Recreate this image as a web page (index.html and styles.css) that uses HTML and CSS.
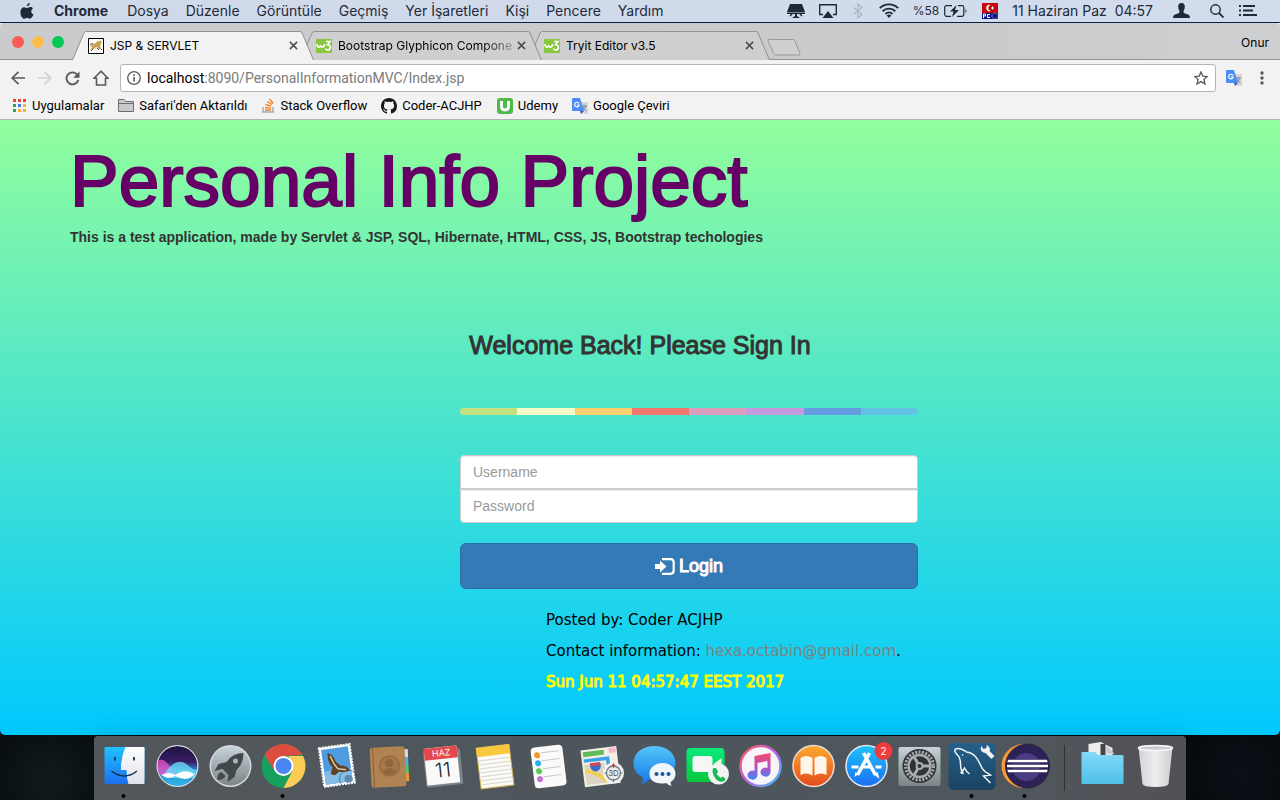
FILE: index.html
```html
<!DOCTYPE html>
<html lang="tr">
<head>
<meta charset="utf-8">
<meta name="viewport" content="width=device-width, initial-scale=1">
<title>JSP &amp; SERVLET</title>
<link rel="stylesheet" href="styles.css">
</head>
<body>
<svg class="defs" aria-hidden="true">
  <defs>
    <linearGradient id="g-blue" x1="0" y1="0" x2="0" y2="1"><stop offset="0" stop-color="#1ec3fb"/><stop offset="1" stop-color="#1d6ff0"/></linearGradient>
    <linearGradient id="g-sky" x1="0" y1="0" x2="0" y2="1"><stop offset="0" stop-color="#56c5fb"/><stop offset="1" stop-color="#1578e8"/></linearGradient>
    <linearGradient id="g-white" x1="0" y1="0" x2="0" y2="1"><stop offset="0" stop-color="#ffffff"/><stop offset="1" stop-color="#dfe2e8"/></linearGradient>
    <linearGradient id="g-metal" x1="0" y1="0" x2="0" y2="1"><stop offset="0" stop-color="#c5d3d8"/><stop offset="1" stop-color="#7b8486"/></linearGradient>
    <linearGradient id="g-siri" x1="0" y1="0" x2="0" y2="1"><stop offset="0" stop-color="#1c1440"/><stop offset=".4" stop-color="#3a1c66"/><stop offset=".6" stop-color="#2f8fd0"/><stop offset="1" stop-color="#2fb4e8"/></linearGradient>
    <linearGradient id="g-green" x1="0" y1="0" x2="0" y2="1"><stop offset="0" stop-color="#0bea7c"/><stop offset="1" stop-color="#06c83b"/></linearGradient>
    <linearGradient id="g-orange" x1="0" y1="0" x2="0" y2="1"><stop offset="0" stop-color="#fdab2e"/><stop offset="1" stop-color="#e5491c"/></linearGradient>
    <linearGradient id="g-note" x1="0" y1="0" x2="0" y2="1"><stop offset="0" stop-color="#fb4a66"/><stop offset=".55" stop-color="#b250c8"/><stop offset="1" stop-color="#3f8bf5"/></linearGradient>
    <linearGradient id="g-ring" x1="0" y1="0" x2="1" y2="1"><stop offset="0" stop-color="#fb5a50"/><stop offset=".5" stop-color="#c061e8"/><stop offset="1" stop-color="#35c2f7"/></linearGradient>
    <linearGradient id="g-sql" x1="0" y1="0" x2="0" y2="1"><stop offset="0" stop-color="#25608c"/><stop offset="1" stop-color="#1a4360"/></linearGradient>
    <linearGradient id="g-folder" x1="0" y1="0" x2="0" y2="1"><stop offset="0" stop-color="#83d9f7"/><stop offset="1" stop-color="#4fbfe8"/></linearGradient>
    <linearGradient id="g-trash" x1="0" y1="0" x2="1" y2="0"><stop offset="0" stop-color="#d2d3d6"/><stop offset=".5" stop-color="#eeeef0"/><stop offset="1" stop-color="#cfcfd3"/></linearGradient>
    <clipPath id="c-siri"><circle r="20"/></clipPath>
    <clipPath id="c-eclipse"><circle cx="2" r="20.500"/></clipPath>
    <symbol id="close" viewBox="0 0 10 10"><path d="M1 1l8 8M9 1l-8 8" stroke="#4d4d4d" stroke-width="1.700" fill="none"/></symbol>
    <symbol id="w3" viewBox="0 0 16 14"><rect width="16" height="14" rx="1" fill="#8ac53f"/><path d="M1 5c0 4 3.500 4 3.500 1 0 3 4 3 4-1" fill="none" stroke="#fff" stroke-width="1.600"/><path d="M10 2.500h4l-2.500 3.200c4 0 3.500 5.300 0 5.300q-1.500 0-2-1.500" fill="none" stroke="#fff" stroke-width="1.600"/></symbol>
    <symbol id="translate" viewBox="0 0 16 16"><path d="M8 4h8v12h-5z" fill="#d8d8d8"/><path d="M9.500 8h5.500M12 6.500V8m2 0q-1 3-4 5m1-4q1.500 3 3.500 4" stroke="#738796" fill="none"/><path d="M1 0h7l4 13H1q-1 0-1-1V1q0-1 1-1z" fill="#4d8df6"/><path d="M8 13h4l-3 3z" fill="#3454c4"/><path d="M7 5.500A2.300 2.300 0 1 0 7.200 7H5" stroke="#fff" stroke-width="1.200" fill="none"/></symbol>
    <symbol id="tab-shape" viewBox="0 0 242 29"><path d="M.5 29 12 2Q12.700 .5 14.500 .5H228Q229.500 .5 230 2L241.500 29" stroke="#8f9193"/></symbol>
  </defs>
</svg>

<header class="menubar">
  <nav class="menus" aria-label="Chrome">
    <a class="apple" href="#" aria-label="Apple"><svg width="14" height="16" viewBox="0 0 14 16"><path fill="#1e2a3a" d="M9.800 0c.1 1.500-1.200 3.300-2.900 3.300C6.700 1.700 8.200.2 9.800 0zM12.900 5.400c-2.400 1.500-2 4.900.6 5.900-.8 2.200-2.200 4.500-3.700 4.500-1.100 0-1.400-.7-2.700-.7s-1.700.7-2.700.7C2.300 15.800.4 12.300.4 9.200c0-3.200 2-5 3.900-5 1.200 0 2.100.8 2.900.8.700 0 1.800-.9 3.200-.9 1 0 2 .5 2.500 1.300z"/></svg></a>
    <a class="current" href="#">Chrome</a><a href="#">Dosya</a><a href="#">Düzenle</a><a href="#">Görüntüle</a><a href="#">Geçmiş</a><a href="#">Yer İşaretleri</a><a href="#">Kişi</a><a href="#">Pencere</a><a href="#">Yardım</a>
  </nav>
  <div class="status">
    <svg width="18" height="14" viewBox="0 0 18 14"><path fill="#1e2a3a" d="M3 0h12l3 8H0zM0 8.500h18V10H0zM8 10h2v2l3 2H5l3-2z"/><path d="M3 12l2-2M15 12l-2-2" stroke="#1e2a3a" stroke-width="1.500"/></svg>
    <svg width="18" height="14" viewBox="0 0 18 14"><path d="M4 10.500H.7V.7h16.600v9.800H14" fill="none" stroke="#1e2a3a" stroke-width="1.400"/><path d="M9 7l5.500 7h-11z" fill="#1e2a3a"/></svg>
    <svg class="bluetooth" width="10" height="16" viewBox="0 0 10 16"><path d="M.7 4.500 9 11.500 5 15V1l4 3.500-8.300 7" fill="none" stroke="#a9b4c4" stroke-width="1.200"/></svg>
    <svg width="20" height="15" viewBox="0 0 20 15"><g fill="none" stroke="#1e2a3a" stroke-width="1.900"><path d="M.8 5.200a13 13 0 0 1 18.400 0M3.700 8.200a9 9 0 0 1 12.600 0M6.500 11a5 5 0 0 1 7 0"/></g><path d="M10 15l-2.300-2.500a3.300 3.300 0 0 1 4.600 0z" fill="#1e2a3a"/></svg>
    <span class="battery">%58 <svg width="24" height="12" viewBox="0 0 24 12"><path d="M8 .7H2.500Q.7.700.7 2.500v7q0 1.800 1.800 1.800H7M14 .7h4q1.800 0 1.800 1.800v7q0 1.800-1.800 1.800h-5" fill="none" stroke="#1e2a3a" stroke-width="1.200"/><path d="M12.500 0 6 6.500h3.500L8 12l7-7h-4zM21.500 4v4q2-2 0-4" fill="#1e2a3a"/></svg></span>
    <svg width="16" height="16" viewBox="0 0 16 16"><path fill="#c4070f" d="M0 0h16v10H0z"/><path fill="#0b1785" d="M0 10h16v6H0z"/><path d="M9 2.300a3.200 3.200 0 1 0 0 5.400 2.700 2.700 0 1 1 0-5.400z" fill="#fff"/><path d="M9 5h3M10.500 3.500v3" stroke="#fff"/><path d="M1.500 15v-4h2v2h-2M8 11.500H5.500v3H8" stroke="#fff" fill="none"/><path d="M13 9.500l3.500 3.500-3.500 3.500L9.500 13z" fill="#08127a" stroke="#dbe3ff" stroke-width=".5"/></svg>
    <time>11 Haziran Paz&nbsp; 04:57</time>
    <svg class="user" width="17" height="15" viewBox="0 0 17 15"><path fill="#1e2a3a" d="M8.500 0C11 0 12 1.800 11.800 4c-.1 2-.9 3-1.300 4 0 2 .5 2.300 3 3 2.300.6 3.500 1.500 3.500 4H0c0-2.500 1.200-3.400 3.500-4 2.500-.7 3-1 3-3C6.100 7 5.300 6 5.200 4 5 1.800 6 0 8.500 0z"/></svg>
    <svg class="search" width="14" height="14" viewBox="0 0 14 14"><circle cx="5.500" cy="5.500" r="4.700" fill="none" stroke="#1e2a3a" stroke-width="1.400"/><path d="M9 9l4.500 4.500" stroke="#1e2a3a" stroke-width="1.800"/></svg>
    <svg class="list" width="18" height="11" viewBox="0 0 18 11"><path d="M0 1h2M0 5.500h2M0 10h2M4 1h12M4 5.500h10M4 10h14" stroke="#1e2a3a" stroke-width="1.900"/></svg>
  </div>
</header>

<div class="browser">
  <div class="tabstrip">
    <div class="lights"><button class="red" aria-label="Kapat"></button><button class="amber" aria-label="Küçült"></button><button class="green" aria-label="Büyüt"></button></div>
    <div class="tab active"><svg class="shape"><use href="#tab-shape"/></svg>
      <svg width="16" height="16" viewBox="0 0 16 16"><path d="M.5.5h15v15H.5z" fill="#fff" stroke="#000"/><path d="M8 5l1.500-2.500 1.500 1 2-1.500.5 3L12 8l1.500 3H11L8.500 9 6 11l-4 1 2.500-3L2 9l3-3z" fill="#c9a252"/><path d="M2 6.500l3-1M3 13l2-2m4-1 2 2m2-1 1 1M10 4.500h.01" stroke="#4f4533" fill="none"/></svg>
      <a href="#">JSP &amp; SERVLET</a><button aria-label="Sekmeyi kapat"><svg width="9" height="9"><use href="#close"/></svg></button></div>
    <div class="tab second"><svg class="shape"><use href="#tab-shape"/></svg><svg width="16" height="14"><use href="#w3"/></svg><a class="fade" href="#">Bootstrap Glyphicon Compone</a><button aria-label="Sekmeyi kapat"><svg width="9" height="9"><use href="#close"/></svg></button></div>
    <div class="tab third"><svg class="shape"><use href="#tab-shape"/></svg><svg width="16" height="14"><use href="#w3"/></svg><a href="#">Tryit Editor v3.5</a><button aria-label="Sekmeyi kapat"><svg width="9" height="9"><use href="#close"/></svg></button></div>
    <button class="newtab" aria-label="Yeni sekme"><svg width="34" height="17" viewBox="0 0 34 17"><path d="M2.500.5H26q1.500 0 2 1.500l5 12.500q.5 1.500-1.500 1.500H9q-1.500 0-2.200-1.500L1 2Q.5.500 2.500.5z" fill="#cfcfcf" stroke="#999"/></svg></button>
    <button class="profile">Onur</button>
  </div>
  <div class="toolbar">
    <button aria-label="Geri"><svg width="14" height="14" viewBox="0 0 14 14"><path d="M14 7H1.500M7.500.8 1.200 7l6.300 6.200" fill="none" stroke="#5a5a5a" stroke-width="1.700"/></svg></button>
    <button aria-label="İleri"><svg width="14" height="14" viewBox="0 0 14 14"><path d="M0 7h12.500M6.500.8 12.800 7l-6.300 6.200" fill="none" stroke="#d3d3d3" stroke-width="1.700"/></svg></button>
    <button aria-label="Yenile"><svg width="15" height="15" viewBox="0 0 15 15"><path d="M12.500 4A6 6 0 1 0 13.300 9" fill="none" stroke="#5a5a5a" stroke-width="1.900"/><path d="M14.500.5v6.300H8.200z" fill="#5a5a5a"/></svg></button>
    <button aria-label="Ana sayfa"><svg width="16" height="16" viewBox="0 0 16 16"><path d="M8 1.200 1 8.300h2.500V15h9V8.300H15z" fill="none" stroke="#5a5a5a" stroke-width="1.600"/></svg></button>
    <div class="omnibox">
      <svg width="14" height="14" viewBox="0 0 14 14"><circle cx="7" cy="7" r="6.300" fill="none" stroke="#5a5a5a" stroke-width="1.300"/><path d="M7 6v4.500M7 3.300v1.600" stroke="#5a5a5a" stroke-width="1.600"/></svg>
      <a class="url" href="#">localhost<span>:8090/PersonalInformationMVC/Index.jsp</span></a>
      <svg width="14" height="14" viewBox="0 0 14 14"><path d="M7 .9l1.800 4.200 4.600.4-3.500 3 1.100 4.500L7 10.600 3 13l1.100-4.500-3.500-3 4.600-.4z" fill="none" stroke="#5a5a5a" stroke-width="1.300"/></svg>
    </div>
    <button class="ext" aria-label="Google Çeviri uzantısı"><svg width="16" height="16"><use href="#translate"/></svg></button>
    <button class="more" aria-label="Menü"><svg width="4" height="14" viewBox="0 0 4 14"><g fill="#5a5a5a"><circle cx="2" cy="2" r="1.700"/><circle cx="2" cy="7" r="1.700"/><circle cx="2" cy="12" r="1.700"/></g></svg></button>
  </div>
  <nav class="bookmarks" aria-label="Yer işaretleri">
    <a href="#"><svg width="14" height="14" viewBox="0 0 14 14"><path fill="#e9433a" d="M0 0h3v3H0zM5 0h3v3H5zM10 0h3v3h-3z"/><path fill="#2fa35b" d="M0 5h3v3H0zM0 10h3v3H0z"/><path fill="#3b7def" d="M5 5h3v3H5z"/><path fill="#f3b23c" d="M10 5h3v3h-3zM5 10h3v3H5zM10 10h3v3h-3z"/></svg>Uygulamalar</a>
    <a href="#"><svg width="16" height="13" viewBox="0 0 16 13"><path d="M.5 12.500V.5h5.500l1.500 2h8v10zM.5 4.500h15" fill="#c9c9c9" stroke="#6f6f6f"/></svg>Safari'den Aktarıldı</a>
    <a href="#"><svg width="14" height="15" viewBox="0 0 14 15"><path d="M1 9v5h10V9" fill="none" stroke="#aaa" stroke-width="1.500"/><path d="M3 12h6M3 9.500l6 .6M3.500 6.500l5.700 1.700M5 3.500l5 3M7.500 1l3.700 4.500" stroke="#f48024" stroke-width="1.400"/></svg>Stack Overflow</a>
    <a href="#"><svg width="16" height="16" viewBox="0 0 16 16"><path fill="#161616" d="M8 0C3.580 0 0 3.580 0 8c0 3.540 2.290 6.530 5.470 7.590.4.070.55-.17.55-.38 0-.19-.01-.82-.01-1.490-2.010.37-2.530-.49-2.690-.94-.09-.23-.48-.94-.82-1.130-.28-.15-.68-.52-.01-.53.63-.01 1.080.58 1.230.82.72 1.210 1.870.87 2.330.66.070-.52.28-.87.51-1.070-1.780-.2-3.640-.89-3.640-3.950 0-.87.31-1.590.82-2.150-.08-.2-.36-1.020.08-2.120 0 0 .67-.21 2.200.82.64-.18 1.320-.27 2-.27s1.360.09 2 .27c1.530-1.040 2.200-.82 2.200-.82.44 1.100.16 1.920.08 2.120.51.56.82 1.270.82 2.150 0 3.070-1.870 3.750-3.650 3.950.29.25.54.73.54 1.480 0 1.070-.01 1.930-.01 2.200 0 .21.15.46.55.38A8.010 8.010 0 0 0 16 8c0-4.420-3.580-8-8-8z"/></svg>Coder-ACJHP</a>
    <a class="udemy" href="#"><svg width="16" height="16" viewBox="0 0 16 16"><rect width="16" height="16" rx="3" fill="#4fb94b"/><path d="M4.500 3v5.500q0 3.500 3.500 3.500t3.500-3.500V3" fill="none" stroke="#fff" stroke-width="2.800"/></svg>Udemy</a>
    <a href="#"><svg width="16" height="16"><use href="#translate"/></svg>Google Çeviri</a>
  </nav>
</div>

<main class="page">
  <div class="container">
    <h1>Personal Info Project</h1>
    <p class="lead">This is a test application, made by Servlet &amp; JSP, SQL, Hibernate, HTML, CSS, JS, Bootstrap techologies</p>
    <h2>Welcome Back! Please Sign In</h2>
    <form class="signin" onsubmit="return false">
      <div class="rainbow"><i></i><i></i><i></i><i></i><i></i><i></i><i></i><i></i></div>
      <input class="first" type="text" placeholder="Username" aria-label="Username">
      <input class="last" type="password" placeholder="Password" aria-label="Password">
      <button type="submit"><svg width="20" height="17" viewBox="0 0 20 17"><path d="M0 6h5V2.500L11.500 8.500 5 14.500V11H0z" fill="#fff"/><path d="M7 1.200h8.500q3.200 0 3.200 3.200v8.200q0 3.200-3.200 3.200H7" fill="none" stroke="#fff" stroke-width="2.200"/></svg>Login</button>
      <footer>
        <p>Posted by: Coder ACJHP</p>
        <p>Contact information: <a href="mailto:hexa.octabin@gmail.com">hexa.octabin@gmail.com</a>.</p>
        <p class="stamp">Sun Jun 11 04:57:47 EEST 2017</p>
      </footer>
    </form>
  </div>
</main>

<div class="desktop">
<nav class="dock" aria-label="Dock">
  <button aria-label="Finder"><svg viewBox="-26.5 -30 53 64"><rect x="-20" y="-19" width="40" height="37" rx="1" fill="url(#g-blue)"/><path d="M1-19Q-4-8-3.500 4H2Q2 12 4 18H19q1 0 1-1V-18q0-1-1-1z" fill="url(#g-white)"/><path d="M-9.500-9v3.500M9.500-9v3.500" stroke="#14304e" stroke-width="1.800"/><path d="M-13 5Q0 15 12.500 5" fill="none" stroke="#14304e" stroke-width="1.500"/><circle cx="-1" cy="30" r="2"/></svg></button>
  <button aria-label="Siri"><svg viewBox="-26.5 -30 53 64"><circle r="21" fill="#dcdde2"/><g clip-path="url(#c-siri)"><circle r="20" fill="url(#g-siri)"/><path d="M-20-5Q-14-9-8 0T6 9H-20z" fill="#f04fc8" opacity=".75"/><path d="M-12 6Q0-10 10-1T20 1V12H-12z" fill="#6fe3fb" opacity=".75"/><path d="M-16 9Q-9 5-2 9 7 2 17 8 9 17-2 10-10 14-16 9z" fill="#fff"/></g></svg></button>
  <button aria-label="Launchpad"><svg viewBox="-26.5 -30 53 64"><circle r="21" fill="#d5dadd"/><circle r="19.500" fill="url(#g-metal)"/><path d="M13-13Q2-13-4-4L-12-2-16 5-8 3-2 9-3 16 4 11 6 4Q13-2 13-13zM-9 6Q-14 8-13 14-7 14-5 10z" fill="#43484c"/><circle cx="5" cy="-5" r="2.500" fill="#a9b5ba"/></svg></button>
  <button aria-label="Chrome"><svg viewBox="-26.5 -30 53 64"><circle r="22" fill="#16a05d"/><path d="M-19-11A22 22 0 0 1 19-11L0-10-9 5z" fill="#dc4c40"/><path d="M19.500-10A22 22 0 0 1 0 22L9 5 5-10z" fill="#fdcc55"/><circle r="10" fill="#fff"/><circle r="8" fill="#4b86ee"/><circle cx="-1" cy="30" r="2"/></svg></button>
  <button aria-label="Mail"><svg viewBox="-26.5 -30 53 64"><g transform="rotate(-8)"><rect x="-15" y="-20" width="31" height="39" fill="#fff" stroke="#fff" stroke-width="2" stroke-dasharray="2 1"/><rect x="-13" y="-18" width="27" height="35" fill="#4f9be0"/><path d="M-13 4h27v13h-27z" fill="#83bde8"/><path d="M-7-14Q-2-12 0-4L4 0Q11 1 13 6 7 8 2 6L-3 9-7 7-4 1Q-9-5-7-14z" fill="#5f4024"/><path d="M-5-11L-2-2 1 3 9 5" stroke="#dcc6a1" fill="none" stroke-width="1.500"/></g><circle cx="12" cy="13" r="9" fill="none" stroke="#3d4f60" opacity=".6"/><circle cx="12" cy="13" r="4" fill="#35566f" opacity=".5"/></svg></button>
  <button aria-label="Kişiler"><svg viewBox="-26.5 -30 53 64"><g transform="rotate(-3)"><path d="M15-16h4v8h-4z" fill="#dce0e2"/><path d="M15-8h4v8h-4z" fill="#42b8e6"/><path d="M15 0h4v8h-4z" fill="#54cb69"/><path d="M15 8h4v8h-4z" fill="#ec9937"/><rect x="-19" y="-19" width="35" height="40" rx="3" fill="#b18352"/><path d="M-16-19v40" stroke="#8a6238"/><circle r="10" fill="#a67749" stroke="#8f663e"/><circle cy="-3" r="4" fill="#8f663e"/><path d="M-7 6q7-8 14 0-7 5-14 0" fill="#8f663e"/></g></svg></button>
  <button aria-label="Takvim"><svg viewBox="-26.5 -30 53 64"><g transform="rotate(-6)"><rect x="-18" y="-16" width="37" height="36" rx="2" fill="#7b8589"/><rect x="-17" y="-19" width="33" height="37" rx="1" fill="#fafafa"/><path d="M-17-19h33v12h-33z" fill="#e5484c"/><text x="0" y="-10" class="cal-month">HAZ</text><text x="0" y="11" class="cal-day">11</text></g></svg></button>
  <button aria-label="Notlar"><svg viewBox="-26.5 -30 53 64"><g transform="rotate(-7)"><rect x="-17" y="-20" width="33" height="41" fill="#fbfaf5" stroke="#d9b65d"/><path d="M-17-20h33v9h-33z" fill="#f9c83e"/><path d="M-16-7h31m-31 4h31m-31 4h31m-31 4h31m-31 4h31m-31 4h31m-31 4h31" stroke="#cfcfcb" stroke-width=".8"/></g></svg></button>
  <button aria-label="Anımsatıcılar"><svg viewBox="-26.5 -30 53 64"><g transform="rotate(-7)"><rect x="-16" y="-20" width="32" height="41" rx="4" fill="#fafafa"/><path d="M-6-14h18M-6-6h18M-6 2h18M-6 10h18" stroke="#c9c9c9"/><circle cx="-10" cy="-12" r="3" fill="#fb9427"/><circle cx="-10" cy="-4" r="3" fill="#1faef0"/><circle cx="-10" cy="4" r="3" fill="#54ce4b"/><circle cx="-10" cy="12" r="3" fill="#c76fdd"/></g></svg></button>
  <button aria-label="Haritalar"><svg viewBox="-26.5 -30 53 64"><g transform="rotate(-7)"><rect x="-19" y="-18" width="36" height="37" fill="#f2efe6"/><path d="M-17-16h21v5h-21z" fill="#63bb57"/><path d="M9-17h7v5H9z" fill="#f4b9c6"/><path d="M-17-7H7v20" fill="none" stroke="#3ba1e8" stroke-width="3.500"/><path d="M-17-3H3v20h-20z" fill="#ddd4c3"/><path d="M-17 3Q-6 5 4 16" fill="none" stroke="#f6cf49" stroke-width="3.500"/><path d="M-11-4h10q2 7-5 9Q-13 3-11-4" fill="#386ec5"/><path d="M-11-4h10v3h-10z" fill="#d9474f"/></g><circle cx="12" cy="7" r="10.500" fill="#f2f3f4"/><circle cx="12" cy="7" r="7" fill="#e7ebed" stroke="#737d83" stroke-width="1.300"/><path d="M12-2v4M12 13v3M3 7h2M19 7h2" stroke="#666"/><path d="M12-3l2 3h-4z" fill="#e02d2d"/><text x="12" y="10" class="map-label">3D</text></svg></button>
  <button aria-label="Mesajlar"><svg viewBox="-26.5 -30 53 64"><path d="M0-20C12-20 21-13 21-3S12 14 0 14q-3 0-6-.5-3 4-7 4.500 2-3 1-7-9-4-9-14C-21-13-12-20 0-20z" fill="url(#g-sky)"/><path d="M8-3C15-3 21 1 21 8q0 5-5 8 0 2 1 4-4-1-5-3C2 19-5 15-5 8S1-3 8-3z" fill="#f0f5fa"/><g fill="#1b5796"><circle cx="2" cy="8" r="2"/><circle cx="8" cy="8" r="2"/><circle cx="14" cy="8" r="2"/></g></svg></button>
  <button aria-label="FaceTime"><svg viewBox="-26.5 -30 53 64"><rect x="-21" y="-18" width="38" height="34" rx="4" fill="url(#g-green)"/><rect x="-15" y="-10" width="20" height="16" rx="3" fill="#f4f7f5"/><path d="M6-2l8-6V6z" fill="#e8f3ec"/><circle cx="11" cy="8" r="10.500" fill="#f2f4f3"/><path d="M6 2l2.500 0 2 4-1.500 2 4 4 2-1.500 3 2-1 2.500Q10 18 6 9 4 4 6 2z" fill="#16b857"/></svg></button>
  <button aria-label="iTunes"><svg viewBox="-26.5 -30 53 64"><circle r="20" fill="#f7f5fa" stroke="url(#g-ring)" stroke-width="2.500"/><path d="M-6-10L10-13V6a5 4.500 0 1 1-3-4V-5l-10 2V9a5 4.500 0 1 1-3-4z" fill="url(#g-note)"/></svg></button>
  <button aria-label="iBooks"><svg viewBox="-26.5 -30 53 64"><circle r="20.500" fill="url(#g-orange)" stroke="#eadfd8" stroke-width="1.500"/><path d="M-1-8Q-7-12-13-8V9Q-7 6-1 9.500zM1-8Q7-12 13-8V9Q7 6 1 9.500z" fill="#fff6e9"/></svg></button>
  <button aria-label="App Store"><svg viewBox="-26.5 -30 53 64"><circle r="20.500" fill="url(#g-blue)" stroke="#dfeaf4" stroke-width="1.500"/><path d="M3-13L-9 9M-3-13L9 9" stroke="#fff" stroke-width="3.500"/><path d="M-15 1h7m3 0h10m4 0h6" stroke="#fff" stroke-width="3"/><path d="M-11 6l3 2-4 3zM7 8l4-2 2 7z" fill="#fff"/><circle cx="17" cy="-15" r="9" fill="#ef3b3c"/><text x="17" y="-11" class="badge">2</text></svg></button>
  <button aria-label="Sistem Tercihleri"><svg viewBox="-26.5 -30 53 64"><rect x="-21" y="-19" width="42" height="39" rx="2" fill="url(#g-metal)"/><circle r="17" fill="#303234"/><circle r="14" fill="none" stroke="#a9adaf" stroke-width="3" stroke-dasharray="2 1.400"/><circle r="11" fill="none" stroke="#a9adaf" stroke-width="2.500"/><path d="M0 0h11M0 0l-6-10M0 0l-6 10" stroke="#a9adaf" stroke-width="3"/><circle r="4" fill="#a9adaf"/><circle r="2" fill="#303234"/></svg></button>
  <button aria-label="MySQL Workbench"><svg viewBox="-26.5 -30 53 64"><rect x="-24" y="-23" width="47" height="47" rx="5" fill="url(#g-sql)"/><path d="M-9 8Q-12 4-12-2-12-8-15-11-19-15-17-17C-12-19-9-16-6-14 3-13 6-5 9 1 11 6 15 7 18 9L11 10 18 17M-12 6L-11 7-8 2Q-6 6-3 8" fill="none" stroke="#eef5f8" stroke-width="1.500"/><circle cx="-10" cy="-11" r=".8" fill="#fff"/><path d="M9-20l2 3 3-1 0-3c4 2 4 5 3 6l5 5-3 3-6-6c-4 0-6-4-4-7z" fill="#f1f1f1"/><circle cx="-1" cy="30" r="2"/></svg></button>
  <button aria-label="Eclipse"><svg viewBox="-26.5 -30 53 64"><circle cx="-2" r="22" fill="#f8983a"/><circle cx="2" r="22" fill="#2c2255" stroke="#2a2740"/><g clip-path="url(#c-eclipse)"><circle cx="1" cy="1" r="14" fill="#4b3c85"/><path d="M-20-5h43M-20 0h43M-20 5h43" stroke="#2c2255" stroke-width="4"/><path d="M-20-5h43M-20 0h43M-20 5h43" stroke="#fff" stroke-width="2.500"/></g><circle cx="-1" cy="30" r="2"/></svg></button>
  <span class="divider"></span>
  <button aria-label="Belgeler"><svg viewBox="-26.5 -30 53 64"><path d="M-14-22L-2-24 10-18V0h-24z" fill="#ededed"/><path d="M-2-22h5V-10h-5z" fill="#444"/><path d="M4-21l8 9H4z" fill="#cacaca"/><path d="M-21-13q0-1 1-1h13l2 3H20q1 0 1 1V18h-42z" fill="url(#g-folder)"/></svg></button>
  <button aria-label="Çöp Sepeti"><svg viewBox="-26.5 -30 53 64"><path d="M-17-19L-13 18Q-12 21 0 21T13 18L17-19z" fill="url(#g-trash)"/><ellipse cy="-18" rx="17" ry="2.500" fill="#cbccd0" stroke="#f8f8fa" stroke-width="1.500"/></svg></button>
</nav>
</div>
</body>
</html>
```

FILE: styles.css
```css
* { box-sizing: border-box; }

body {
  margin: 0;
  min-height: 100vh;
  display: flex;
  flex-direction: column;
  background: #05080a;
  font-family: Inter, "Liberation Sans", sans-serif;
}

a { color: inherit; text-decoration: none; }
button { border: 0; padding: 0; background: none; color: inherit; font: inherit; }
svg { display: block; flex: none; }
.defs { position: absolute; width: 0; height: 0; }

/* System menu bar */
.menubar {
  height: 23px;
  padding: 0 23px 1px 20px;
  display: flex;
  align-items: center;
  justify-content: space-between;
  background: linear-gradient(90deg, #cfd9ea, #d2dcec);
  border-bottom: 1px solid #0d2142;
  color: #1e2a3a;
  font-size: 14px;
  white-space: nowrap;
}
.menus, .status { display: flex; align-items: center; }
.menus { gap: 17px; }
.current { font-weight: 700; margin-right: 2px; }
.apple { margin-right: 3px; }
.status { gap: 14px; }
.bluetooth { margin: 0 2px; }
.battery { display: flex; align-items: center; gap: 5px; font-size: 12px; }
.user { margin: 0 6px; }
.search { margin-right: 1px; }

/* Browser chrome */
.browser { background: #f2f2f2; border-bottom: 1px solid #b3b3b3; }
.tabstrip {
  height: 37px;
  padding: 8px 11px 0 12px;
  display: flex;
  background: linear-gradient(90deg, #cacbcd, #c9cacc 70%, #cecfd0);
  border-bottom: 1px solid #8f9193;
  border-radius: 4px 4px 0 0;
}
.lights { display: flex; gap: 8px; padding-top: 5px; width: 60px; flex: none; }
.lights button { width: 12px; height: 12px; border-radius: 50%; }
.red { background: #fc5b57; }
.amber { background: #fdbc49; }
.green { background: #06c855; }
.tab {
  position: relative;
  width: 242px;
  height: 29px;
  flex: 0 1 242px;
  padding: 1px 16px;
  display: flex;
  align-items: center;
  gap: 6px;
  font-size: 12px;
  isolation: isolate;
}
.tab a { flex: 1; white-space: nowrap; }
.tab button { margin-left: -3px; }
.shape { position: absolute; inset: 0; width: 100%; height: 100%; z-index: -1; fill: #cfcfcf; }
.active { z-index: 3; }
.active .shape { fill: #f2f2f2; }
.second { z-index: 2; margin-left: -14px; }
.third { z-index: 1; margin-left: -14px; }
.fade { mask-image: linear-gradient(90deg, #000 82%, rgba(0, 0, 0, .2)); }
.newtab { align-self: flex-start; margin: 8px 0 0 -3px; }
.profile { margin-left: auto; align-self: flex-start; padding-top: 4px; font-size: 12px; }

.toolbar { display: flex; align-items: center; gap: 13px; padding: 4px 16px 0 11px; }
.omnibox {
  flex: 1;
  height: 28px;
  margin-left: -2px;
  padding: 0 7px 0 6px;
  display: flex;
  align-items: center;
  gap: 6px;
  background: #fff;
  border: 1px solid #b5b5b5;
  border-radius: 3px;
  font-family: Roboto, Inter, sans-serif;
  font-size: 14px;
}
.url { flex: 1; }
.url span { color: #7b7b7b; }
.ext { margin-left: -3px; }
.more { margin-left: 5px; }
.bookmarks {
  height: 27px;
  padding: 0 13px;
  display: flex;
  align-items: center;
  gap: 14px;
  font-family: Roboto, Inter, sans-serif;
  font-size: 13px;
  white-space: nowrap;
}
.bookmarks a { display: flex; align-items: center; gap: 5px; }
.udemy { margin-left: 1px; }

/* Web page */
.page {
  flex: 1;
  background: linear-gradient(#92fe9d, #00c9ff);
  border-radius: 0 0 5px 5px;
  font-family: "Liberation Sans", Arial, sans-serif;
  color: #333;
}
.container { max-width: 1170px; margin: 0 auto; padding: 22px 15px 0; }
h1 { margin: 0; color: #606; font-size: 73px; font-weight: 500; line-height: 78px; -webkit-text-stroke: 2px #606; }
.lead { margin: 7px 0 0; font-size: 14px; font-weight: 700; line-height: 20px; }
h2 { margin: 85px 0 0; font-size: 25px; font-weight: 500; line-height: 26px; text-align: center; -webkit-text-stroke: 1px #333; }
.signin { width: 458px; max-width: 100%; margin: 50px 0 0 390px; }
.rainbow { display: flex; height: 7px; margin-bottom: 40px; border-radius: 5px; overflow: hidden; }
.rainbow i { flex: 1; background: #c4e17f; }
.rainbow i:nth-child(2) { background: #f7fdca; }
.rainbow i:nth-child(3) { background: #fecf71; }
.rainbow i:nth-child(4) { background: #f0776c; }
.rainbow i:nth-child(5) { background: #db9dbe; }
.rainbow i:nth-child(6) { background: #c49cde; }
.rainbow i:nth-child(7) { background: #669ae1; }
.rainbow i:nth-child(8) { background: #62c2e4; }
.signin input {
  display: block;
  width: 100%;
  height: 34px;
  padding: 6px 12px;
  border: 1px solid #ccc;
  background: #fff;
  box-shadow: inset 0 1px 1px rgba(0, 0, 0, .075);
  font: 14px/20px "Liberation Sans", Arial, sans-serif;
}
.signin input::placeholder { color: #999; opacity: 1; }
.first { border-radius: 4px 4px 0 0; }
.last { border-radius: 0 0 4px 4px; }
.signin button {
  width: 100%;
  height: 46px;
  margin: 20px 0 16px;
  display: flex;
  align-items: center;
  justify-content: center;
  gap: 4px;
  background: #337ab7;
  border: 1px solid #2e6da4;
  border-radius: 6px;
  color: #fff;
  font-size: 18px;
  -webkit-text-stroke: 1px #fff;
}
footer { padding-left: 86px; color: #000; font: 15px/31px "DejaVu Sans", Verdana, sans-serif; white-space: nowrap; }
footer p { margin: 0; }
footer a { color: #808080; }
.stamp { color: #ff0; -webkit-text-stroke: 1px #ff0; }

/* Dock */
.desktop {
  display: flex;
  justify-content: center;
  padding-top: 1px;
  background: radial-gradient(circle at 4% 70%, #101a1c, transparent 8%), radial-gradient(circle at 97% 60%, #0d0f17, transparent 7%), #05080a;
}
.dock {
  display: flex;
  height: 64px;
  padding: 0 4px;
  background: linear-gradient(90deg, #53575b, #4d565c 50%, #50575c 85%, #535056);
  border-radius: 4px 4px 0 0;
  box-shadow: 0 0 24px rgba(0, 0, 0, .15);
}
.dock button { width: 53px; }
.dock svg { width: 53px; height: 64px; }
.divider { width: 24px; background: linear-gradient(#2c3237, #2c3237) center / 1px 46px no-repeat; }
.cal-month { font: 9px Inter, sans-serif; fill: #fff; text-anchor: middle; }
.cal-day { font: 300 20px Inter, sans-serif; fill: #222; text-anchor: middle; }
.map-label { font: 8px Inter, sans-serif; fill: #555; text-anchor: middle; }
.badge { font: 10px Inter, sans-serif; fill: #fff; text-anchor: middle; }
```
